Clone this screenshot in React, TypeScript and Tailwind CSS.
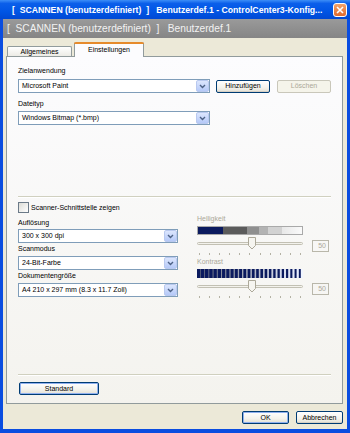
import React from "react";

const ticks = Array.from({ length: 11 }, (_, i) => i);
const stripes = Array.from({ length: 25 }, (_, i) => i);

function Select({ value, width }: { value: string; width: string }) {
  return (
    <div
      className={`${width} h-[14px] flex items-center border border-[#7f9db9] bg-white`}
    >
      <span className="flex-1 pl-[3px] whitespace-nowrap overflow-hidden">{value}</span>
      <div className="w-[13px] h-[12px] rounded-[2px] border border-[#b9c9ef] bg-[linear-gradient(to_bottom,#dce6fd,#b5c9f8)] flex items-center justify-center">
        <svg width="7" height="5" viewBox="0 0 7 5">
          <path d="M1 1 L3.5 3.5 L6 1" fill="none" stroke="#4d6185" strokeWidth="1.4" />
        </svg>
      </div>
    </div>
  );
}

function Button({
  label,
  width,
  variant = "normal",
}: {
  label: string;
  width: string;
  variant?: "normal" | "focus" | "disabled";
}) {
  const border =
    variant === "disabled"
      ? "border-[#c9c7ba] text-[#aca899]"
      : "border-[#003c74] text-black";
  const inner =
    variant === "focus"
      ? "shadow-[inset_0_0_0_1px_#8fb0ef]"
      : variant === "disabled"
        ? ""
        : "shadow-[inset_0_-1px_0_#d6d0c5]";
  const bg =
    variant === "disabled"
      ? "bg-[#f5f4ea]"
      : "bg-[linear-gradient(to_bottom,#ffffff,#f3f2ec_60%,#e3e0d4)]";
  return (
    <div
      className={`${width} h-[13px] rounded-[2px] border ${border} ${inner} ${bg} flex items-center justify-center whitespace-nowrap`}
    >
      {label}
    </div>
  );
}

function Slider() {
  return (
    <div className="flex items-start gap-[9px]">
      <div className="relative w-[106px] h-[20px]">
        <div className="absolute left-0 right-0 top-[5px] h-[3px] rounded-full border border-[#c2c0b3] bg-[#f3f2ec]" />
        <svg className="absolute left-[51px] top-0" width="8" height="13" viewBox="0 0 8 13">
          <path
            d="M0.5 0.5 H7.5 V8.5 L4 12 L0.5 8.5 Z"
            fill="#f6f5f0"
            stroke="#aca899"
          />
        </svg>
        <div className="absolute left-[2px] right-[2px] top-[16px] flex justify-between">
          {ticks.map((t) => (
            <div key={t} className="w-[1px] h-[2px] bg-[#b4b2a4]" />
          ))}
        </div>
      </div>
      <div className="mt-[3px] w-[17px] h-[12px] border border-[#b9b7aa] flex items-center justify-end pr-[2px] text-[#aca899]">
        50
      </div>
    </div>
  );
}

export default function App() {
  return (
    <div className="w-[350px] h-[433px] bg-[#0a4de0] flex flex-col overflow-hidden font-['Liberation_Sans',Arial,sans-serif] text-[7px] leading-[8px] text-black">
      {/* title bar */}
      <div className="h-[19px] shrink-0 flex items-center pl-[12px] pr-[3px] bg-[linear-gradient(to_bottom,#3d8ef7_0%,#0b5fea_18%,#0055e5_60%,#0049d4_100%)]">
        <span className="flex-1 whitespace-pre text-white font-bold text-[8.7px] leading-[10px]">
          {"[  SCANNEN (benutzerdefiniert)  ]   Benutzerdef.1 - ControlCenter3-Konfig..."}
        </span>
        <div className="w-[14px] h-[14px] rounded-[3px] border border-white bg-[linear-gradient(to_bottom,#f3a36b,#e26a2c)] flex items-center justify-center">
          <svg width="8" height="8" viewBox="0 0 8 8">
            <path d="M1 1 L7 7 M7 1 L1 7" stroke="white" strokeWidth="1.6" />
          </svg>
        </div>
      </div>

      <div className="flex-1 flex flex-col mx-[3px] mb-[4px] bg-[#ece9d8]">
        {/* header strip */}
        <div className="h-[19px] shrink-0 flex items-center pl-[4px] bg-[linear-gradient(to_bottom,#9a9a9a,#858585)]">
          <span className="whitespace-pre text-[#f2f2f2] text-[10.2px] leading-[12px]">
            {"[  SCANNEN (benutzerdefiniert)  ]   Benutzerdef.1"}
          </span>
        </div>

        {/* tabs */}
        <div className="h-[19px] shrink-0 flex items-end pl-[4px] relative z-10 -mb-[1px]">
          <div className="w-[65px] h-[10px] mb-[1px] border border-b-0 border-[#919b9c] rounded-t-[2px] bg-[linear-gradient(to_bottom,#ffffff,#ecebe5)] flex items-center justify-center">
            Allgemeines
          </div>
          <div className="w-[70px] h-[15px] ml-[2px] flex flex-col rounded-t-[2px] border-x border-[#919b9c] bg-[#fcfcfe]">
            <div className="h-[2px] bg-[#e68b2c] rounded-t-[2px] -mx-[1px]" />
            <div className="flex-1 flex items-center justify-center pb-[1px]">Einstellungen</div>
          </div>
        </div>

        {/* panel */}
        <div className="h-[348px] mx-[3px] mr-[4px] border border-[#919b9c] bg-[linear-gradient(to_bottom,#fcfcfe,#f4f3ee)] flex flex-col pl-[11px] pr-[11px]">
          <div className="mt-[10px]">Zielanwendung</div>
          <div className="mt-[4px] flex items-center">
            <Select value="Microsoft Paint" width="w-[192px]" />
            <div className="ml-[6px]">
              <Button label="Hinzufügen" width="w-[54px]" />
            </div>
            <div className="ml-[7px]">
              <Button label="Löschen" width="w-[54px]" variant="disabled" />
            </div>
          </div>
          <div className="mt-[7px]">Dateityp</div>
          <div className="mt-[3px]">
            <Select value="Windows Bitmap (*.bmp)" width="w-[192px]" />
          </div>

          <div className="mt-[71px] h-[2px] border-t border-[#d0d0bf] border-b border-b-white" />

          <div className="mt-[4px] h-[11px] flex items-center">
            <div className="w-[11px] h-[11px] border border-[#6b7a88] bg-[linear-gradient(135deg,#dcdcd6,#ffffff)]" />
            <span className="ml-[2px]">Scanner-Schnittstelle zeigen</span>
          </div>

          <div className="flex">
            <div className="w-[160px] flex flex-col mt-[6px]">
              <div>Auflösung</div>
              <div className="mt-[2px]">
                <Select value="300 x 300 dpi" width="w-[160px]" />
              </div>
              <div className="mt-[2px]">Scanmodus</div>
              <div className="mt-[3px]">
                <Select value="24-Bit-Farbe" width="w-[160px]" />
              </div>
              <div className="mt-[2px]">Dokumentengröße</div>
              <div className="mt-[3px]">
                <Select value="A4 210 x 297 mm (8.3 x 11.7 Zoll)" width="w-[160px]" />
              </div>
            </div>

            <div className="ml-[19px] flex flex-col mt-[2px] text-[#aca899]">
              <div>Helligkeit</div>
              <div className="mt-[3px] w-[106px] h-[9px] flex border border-[#a9a9a9]">
                <div className="w-[25px] bg-[#0b1a5e]" />
                <div className="w-[24px] bg-[#5b5b5b]" />
                <div className="w-[12px] bg-[#8f8f8f]" />
                <div className="w-[9px] bg-[#b3b3b3]" />
                <div className="w-[14px] bg-[#d2d2d2]" />
                <div className="flex-1 bg-[linear-gradient(to_right,#e8e8e8,#fafafa)]" />
              </div>
              <div className="mt-[2px]">
                <Slider />
              </div>
              <div className="mt-[1px]">Kontrast</div>
              <div className="mt-[3px]">
                <svg width="106" height="9" viewBox="0 0 106 9">
                  <rect x="0" y="0" width="106" height="9" fill="#0b1a5e" />
                  {stripes.map((i) => {
                    const t = i / 24;
                    const w = 0.7 + t * 1.6;
                    const c = Math.round(110 + t * 130);
                    return (
                      <rect
                        key={i}
                        x={3 + i * 4.2}
                        y="0"
                        width={w}
                        height="9"
                        fill={`rgb(${c},${c + 5},${Math.min(255, c + 20)})`}
                      />
                    );
                  })}
                </svg>
              </div>
              <div className="mt-[2px]">
                <Slider />
              </div>
            </div>
          </div>

          <div className="mt-auto h-[2px] border-t border-[#d0d0bf] border-b border-b-white" />
          <div className="mt-[6px] mb-[8px] ml-[1px]">
            <Button label="Standard" width="w-[80px]" variant="focus" />
          </div>
        </div>

        {/* bottom buttons */}
        <div className="flex justify-end gap-[7px] pt-[7px] pr-[4px]">
          <Button label="OK" width="w-[47px]" variant="focus" />
          <Button label="Abbrechen" width="w-[47px]" />
        </div>
      </div>
    </div>
  );
}
